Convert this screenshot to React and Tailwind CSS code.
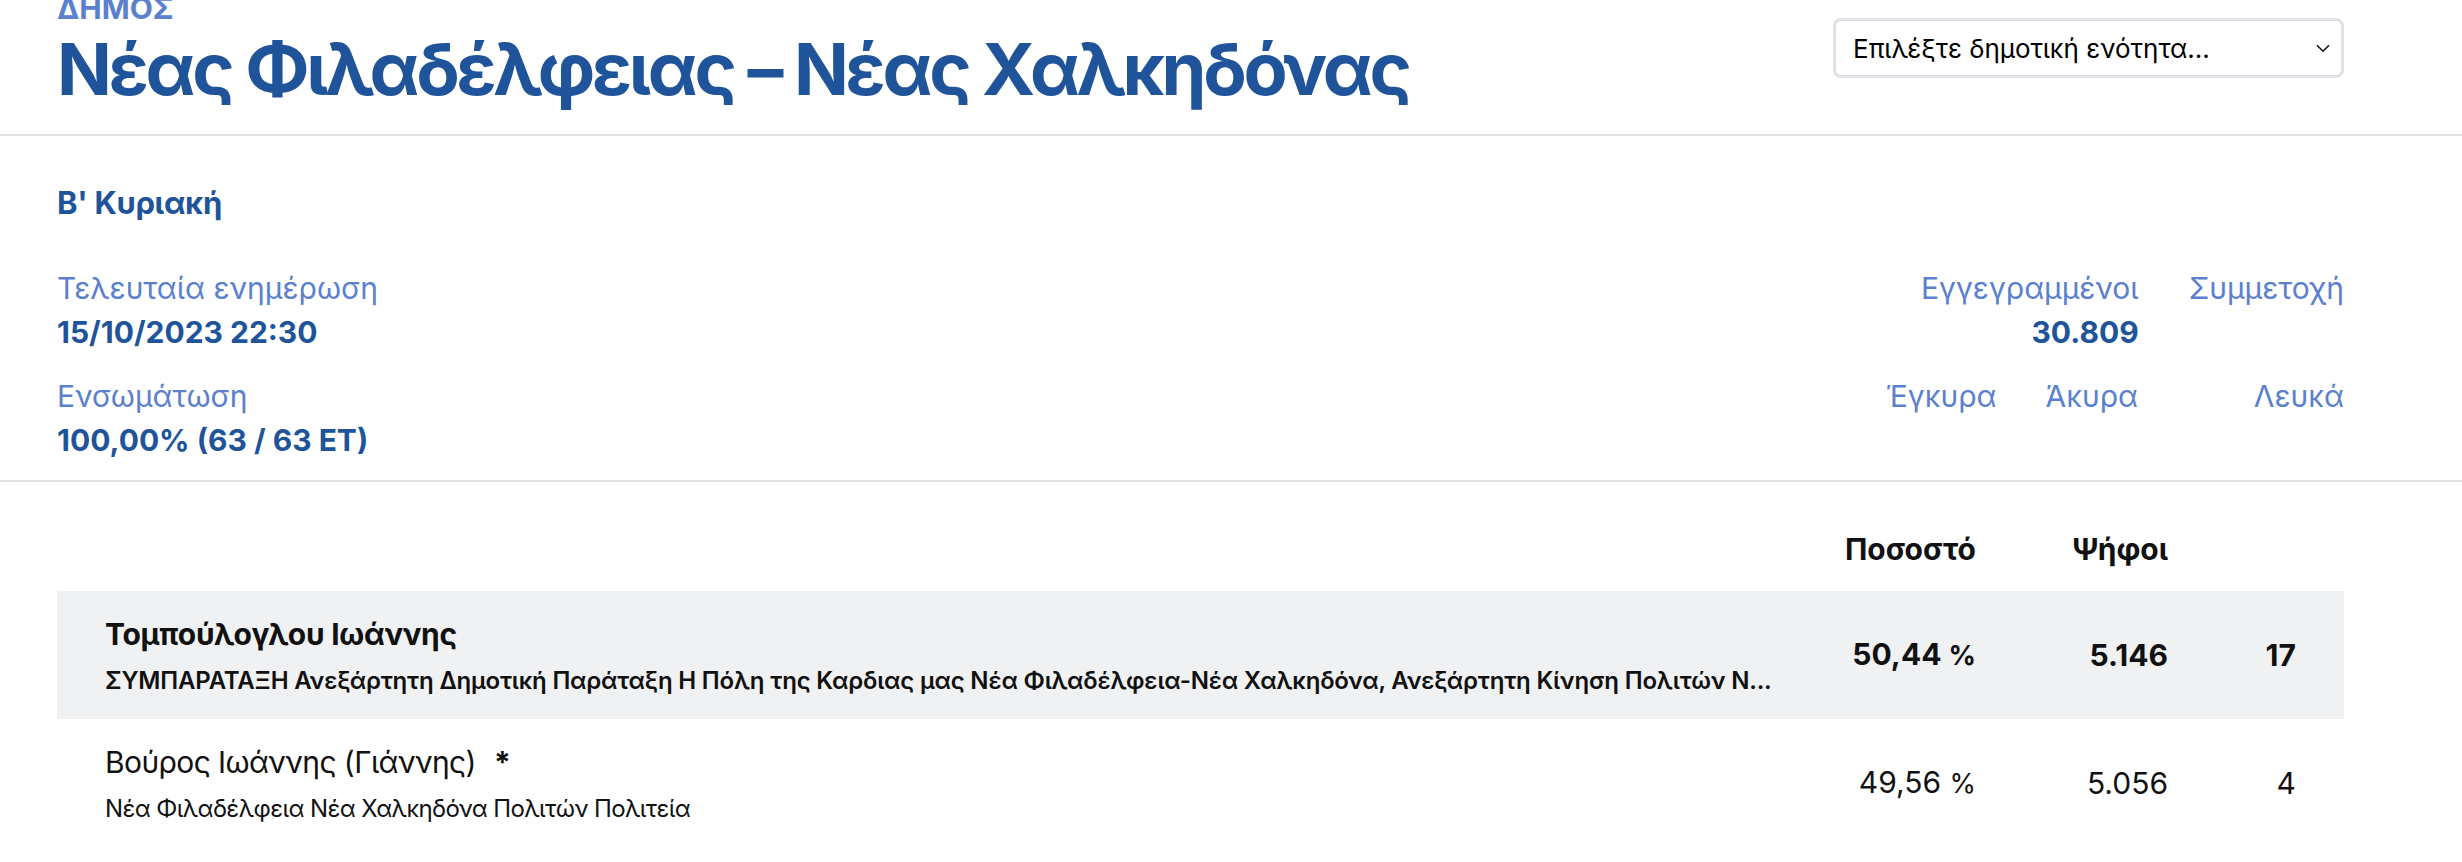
import React from 'react'

const candidates = [
  {
    name: 'Τομπούλογλου Ιωάννης',
    party:
      'ΣΥΜΠΑΡΑΤΑΞΗ Ανεξάρτητη Δημοτική Παράταξη Η Πόλη της Καρδιας μας Νέα Φιλαδέλφεια-Νέα Χαλκηδόνα, Ανεξάρτητη Κίνηση Πολιτών Ν...',
    pct: '50,44',
    votes: '5.146',
    seats: '17',
    winner: true,
  },
  {
    name: 'Βούρος Ιωάννης (Γιάννης)',
    party: 'Νέα Φιλαδέλφεια Νέα Χαλκηδόνα Πολιτών Πολιτεία',
    pct: '49,56',
    votes: '5.056',
    seats: '4',
    incumbent: true,
  },
]

const Label = ({ children, className = '' }) => (
  <div className={`text-[30px] leading-[44px] text-[#5b80cf] ${className}`}>{children}</div>
)

const Value = ({ children }) => (
  <div className="text-[30px] leading-[44px] font-bold text-[#20549a]">{children}</div>
)

const CandidateRow = ({ c }) => (
  <div className={`flex h-[128px] items-center px-[48px] ${c.winner ? 'bg-[#f0f1f3] font-bold' : 'font-normal'}`}>
    <div className="min-w-0 flex-1 self-stretch pt-[21px]">
      <div className={`text-[30px] leading-[44px] ${c.winner ? 'tracking-[-0.008em]' : 'tracking-[-0.02em]'}`}>
        {c.name}
        {c.incumbent && <span className="ml-[18px] font-bold">*</span>}
      </div>
      <div
        className={`mt-[10px] truncate text-[24px] leading-[30px] ${
          c.winner ? 'font-semibold tracking-[-0.008em]' : 'font-normal tracking-[-0.025em]'
        }`}
      >
        {c.party}
      </div>
    </div>
    <div className="w-[200px] text-right text-[30px] leading-[44px]">
      {c.pct} <span className="text-[27px]">%</span>
    </div>
    <div className="w-[192px] text-right text-[30px] leading-[44px]">{c.votes}</div>
    <div className="w-[128px] text-right text-[30px] leading-[44px]">{c.seats}</div>
  </div>
)

const App = () => {
  return (
    <div className="min-h-screen bg-white font-['Inter',sans-serif] text-[#111]">
      <header className="flex items-start justify-between border-b-2 border-[#dee2e6] pb-[29px] pl-[57px] pr-[118px]">
        <div>
          <div className="-mt-[7px] text-[30px] leading-[30px] font-bold text-[#5b80cf]">ΔΗΜΟΣ</div>
          <h1 className="mt-[10px] text-[72px] leading-[72px] font-bold tracking-[-0.045em] text-[#20549a]">
            Νέας Φιλαδέλφειας – Νέας Χαλκηδόνας
          </h1>
        </div>
        <div className="mt-[18px] flex h-[60px] w-[511px] items-center justify-between rounded-[8px] border-[3px] border-[#dee2e6] pl-[17px] pr-[11px] text-[26px] text-black">
          <span>Επιλέξτε δημοτική ενότητα...</span>
          <svg width="14" height="9" viewBox="0 0 14 9" fill="none">
            <path d="M1 1.2l6 6 6-6" stroke="#111" strokeWidth="1.6" />
          </svg>
        </div>
      </header>

      <section className="border-b-2 border-[#dee2e6] pb-[18px] pl-[57px] pr-[118px] pt-[51px]">
        <div className="text-[31px] leading-[32px] font-bold tracking-[-0.01em] text-[#20549a]">Β' Κυριακή</div>
        <div className="mt-[47px] flex justify-between">
          <div>
            <Label>Τελευταία ενημέρωση</Label>
            <Value>15/10/2023 22:30</Value>
          </div>
          <div className="flex gap-[50px] text-right">
            <div>
              <Label>Εγγεγραμμένοι</Label>
              <Value>30.809</Value>
            </div>
            <Label>Συμμετοχή</Label>
          </div>
        </div>
        <div className="mt-[20px] flex justify-between">
          <div>
            <Label>Ενσωμάτωση</Label>
            <Value>100,00% (63 / 63 ΕΤ)</Value>
          </div>
          <div className="flex gap-[49px] text-right">
            <Label>Έγκυρα</Label>
            <Label>Άκυρα</Label>
            <Label className="w-[157px]">Λευκά</Label>
          </div>
        </div>
      </section>

      <section className="pl-[57px] pr-[118px] pt-[45px]">
        <div className="mb-[20px] flex px-[48px] text-[30px] leading-[44px] font-bold">
          <div className="flex-1" />
          <div className="w-[200px] text-right">Ποσοστό</div>
          <div className="w-[192px] text-right">Ψήφοι</div>
          <div className="w-[128px]" />
        </div>
        {candidates.map((c) => (
          <CandidateRow key={c.name} c={c} />
        ))}
      </section>
    </div>
  )
}

export default App
